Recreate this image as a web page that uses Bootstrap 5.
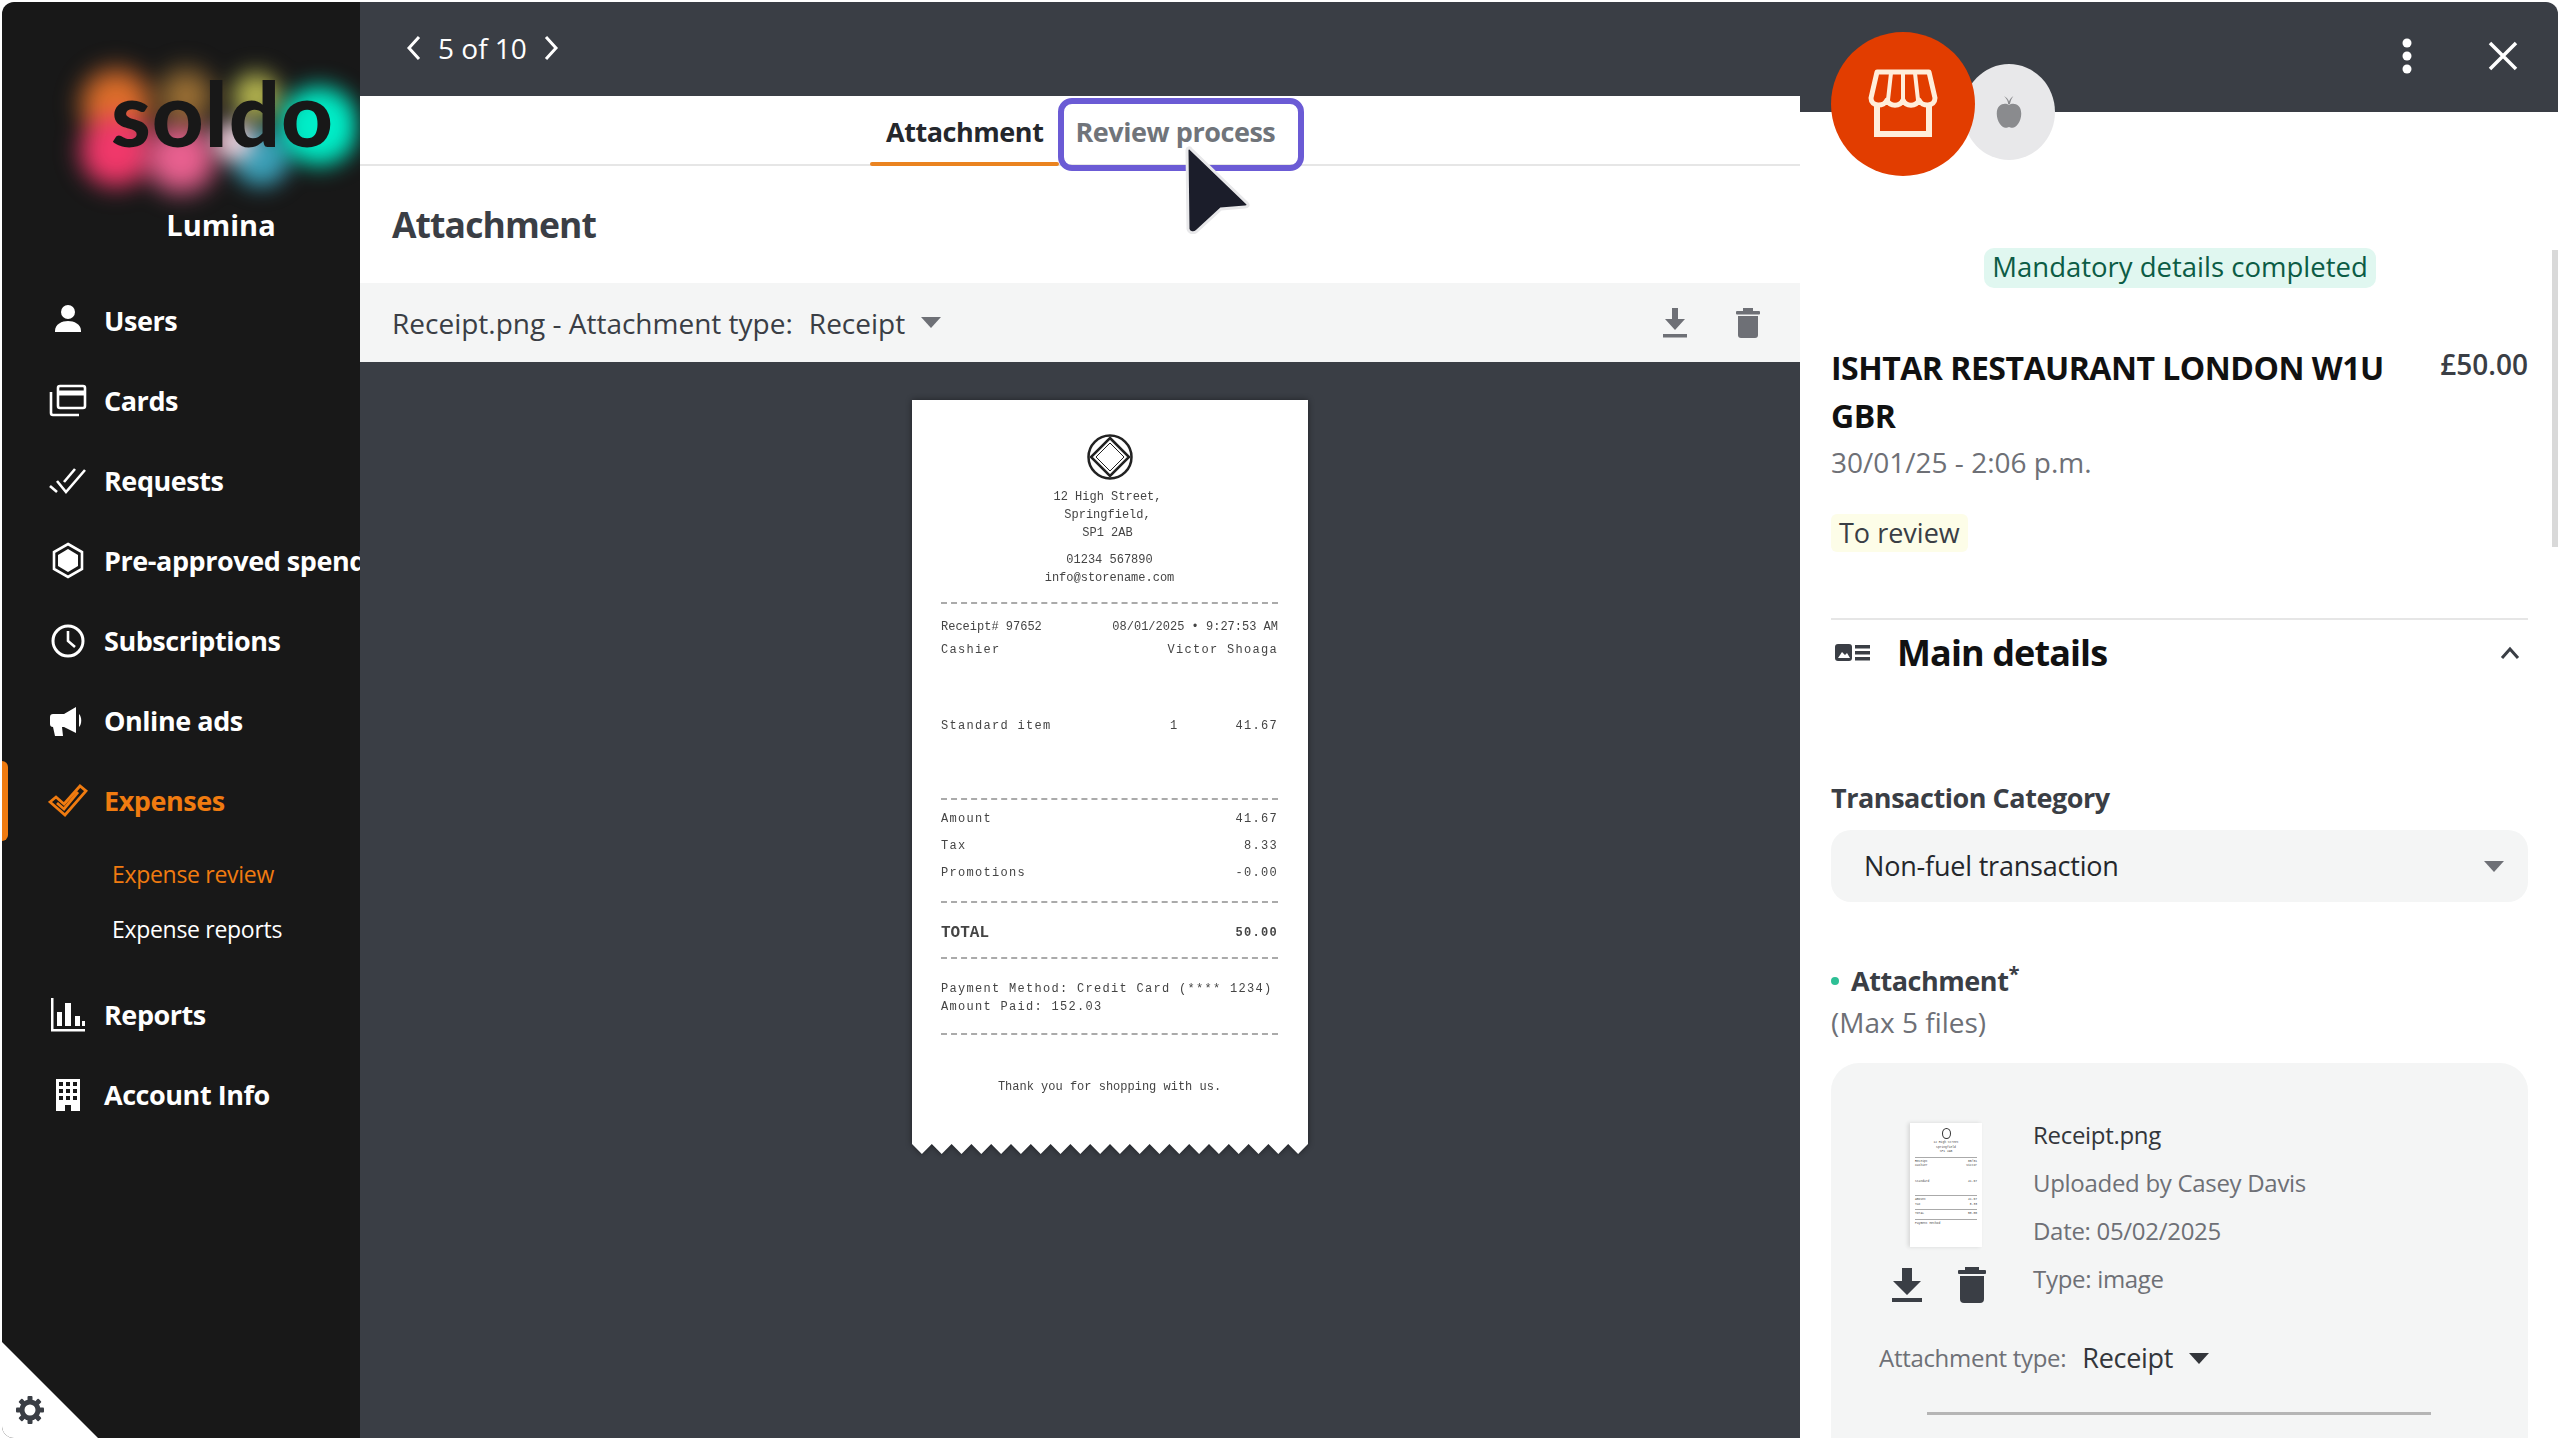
<!DOCTYPE html>
<html lang="en">
<head>
  <meta charset="UTF-8" />
  <title>Expense review</title>
  <link href="https://cdn.jsdelivr.net/npm/bootstrap@5.3.0/dist/css/bootstrap.min.css" rel="stylesheet" />
  <style>
    html, body { height: 100%; }
    body { font-family: "Open Sans", "Noto Sans", sans-serif; background: #fff; padding: 2px; overflow: hidden; color: #3a3e45; }
    a { text-decoration: none; }
    .app-frame { height: 1436px; border-radius: 12px; overflow: hidden; }

    /* sidebar */
    .side { width: 358px; background: #181818; color: #fff; position: relative; overflow: hidden; flex: none; }
    .logo-box { height: 190px; position: relative; }
    .logo-glow { position: absolute; left: 54px; top: 44px; width: 304px; height: 170px; filter: blur(9px);
      background:
        radial-gradient(circle 50px at 263px 80px, #00eec8 55%, transparent),
        radial-gradient(circle 28px at 178px 95px, #ecd0dc 35%, transparent),
        radial-gradient(circle 38px at 205px 112px, #3aa0b8 45%, transparent),
        radial-gradient(circle 34px at 200px 50px, #b8b850 30%, transparent),
        radial-gradient(circle 40px at 130px 50px, #9c7034 25%, transparent),
        radial-gradient(circle 48px at 125px 112px, #e8608f 40%, transparent),
        radial-gradient(circle 48px at 60px 105px, #f0386a 45%, transparent),
        radial-gradient(circle 48px at 60px 58px, #dd6e2a 40%, transparent); }
    .logo-word { position: absolute; left: 109px; top: 60px; font-family: "Lato", sans-serif; font-weight: 900; font-size: 90px; line-height: 100px; color: #181818; letter-spacing: 1px; }
    .org-name { font-size: 29px; font-weight: 700; text-align: center; line-height: 44px; margin-top: 11px; margin-left: 80px; }
    .side-nav { margin-top: 34px; }
    .side-link { height: 80px; display: flex; align-items: center; color: #fff; font-weight: 700; font-size: 27px; padding: 0 0 0 46px; white-space: nowrap; letter-spacing: -.45px; }
    .side-link:hover { color: #fff; }
    .side-ico { width: 40px; height: 40px; flex: none; margin-right: 16px; }
    .side-link.on { color: #f07b10; position: relative; }
    .side-link.on::before { content: ""; position: absolute; left: 0; top: 0; width: 6px; height: 80px; background: #f07b10; border-radius: 0 6px 6px 0; }
    .sub-group { padding: 16px 0 8px; }
    .side-sub { display: block; color: #fff; font-size: 23px; line-height: 34px; padding-left: 110px; margin-bottom: 21px; letter-spacing: -.3px; }
    .side-sub.on { color: #f07b10; }
    .corner { position: absolute; left: 0; bottom: 0; width: 96px; height: 96px; background: #fff; clip-path: polygon(0 0, 100% 100%, 0 100%); }
    .corner svg { position: absolute; left: 14px; bottom: 14px; }

    /* centre */
    .mid { width: 1440px; flex: none; background: #3a3e45; }
    .pager { height: 94px; color: #fff; font-size: 28px; padding: 0 0 2px 46px; }
    .tabs-row { height: 70px; background: #fff; border-bottom: 2px solid #e6e6e6; padding-left: 510px; position: relative; }
    .tab-item { font-size: 27px; font-weight: 700; height: 68px; line-height: 72px; padding: 0 16px; color: #24272c; position: relative; letter-spacing: -.45px; }
    .tab-item.on::after { content: ""; position: absolute; left: 0; right: 0; bottom: -2px; height: 4px; background: #ea8320; border-radius: 2px; }
    .tab-item.off { color: #70747a; }
    .tab-hl { position: absolute; left: 698px; top: 2px; width: 246px; height: 73px; border: 6px solid #6b5bd5; border-radius: 14px; }
    .pointer { position: absolute; left: 820px; top: 50px; }
    .head-block { height: 117px; background: #fff; padding-left: 32px; }
    .head-block h2 { font-size: 35.500px; font-weight: 700; margin: 0; letter-spacing: -.9px; color: #3a3e45; }
    .file-bar { height: 79px; background: #f4f5f5; padding: 0 40px 0 32px; font-size: 28px; }
    .caret-down { width: 0; height: 0; border-left: 10px solid transparent; border-right: 10px solid transparent; border-top: 11px solid #6e7076; display: inline-block; }
    .caret-dark { border-top-color: #33363b; }
    .dark-area { padding: 38px 0 0 552px; }

    /* receipt picture */
    .slip { width: 396px; height: 754px; background: #fff; padding: 34px 30px 0 29px; font-family: "Liberation Mono", monospace; font-size: 12px; line-height: 18px; color: #444; clip-path: polygon(var(--teeth)); filter: blur(.6px); }
    .slip-shadow { filter: drop-shadow(0 0 3px rgba(0,0,0,.45)); width: 396px; }
    .slip-rule { border-top: 2px dashed #aaa; height: 0; }
    .slip-wide { letter-spacing: 1.3px; white-space: nowrap; }
    .slip-total { font-size: 16px; font-weight: 700; }
    .slip-total-val { font-size: 12px; letter-spacing: 1.3px; }
    .slip-qty { margin-right: 57px; }
    .m5 { margin-top: 5px; } .m9 { margin-top: 9px; } .m10 { margin-top: 10px; } .m14 { margin-top: 14px; }
    .m15 { margin-top: 15px; } .m17 { margin-top: 17px; } .m19 { margin-top: 19px; } .m21 { margin-top: 21px; }
    .m43 { margin-top: 43px; } .m58 { margin-top: 58px; } .m63 { margin-top: 63px; }

    /* right panel */
    .detail { flex: 1; background: #fff; position: relative; min-width: 0; }
    .detail-top { height: 110px; background: #3a3e45; position: relative; padding: 30px 0 0 31px; }
    .round-main { width: 144px; height: 144px; border-radius: 50%; background: #e23d00; position: relative; z-index: 2; flex: none; }
    .round-alt { width: 92px; height: 96px; border-radius: 50%; background: #e8e8ea; margin: 32px 0 0 -12px; flex: none; position: relative; z-index: 1; }
    .top-actions { position: absolute; right: 40px; top: 36px; gap: 76px; }
    .detail-body { padding: 0 30px 0 31px; position: relative; }
    .done-pill { width: 392px; height: 40px; line-height: 38px; background: #e0f7f0; color: #0c5c45; border-radius: 10px; font-size: 27.500px; text-align: center; margin: 136px 0 0 153px; }
    .merchant-row { margin-top: 56px; }
    .merchant { font-size: 32px; font-weight: 700; line-height: 48px; color: #111; letter-spacing: -.5px; }
    .amount { font-size: 28px; font-weight: 600; white-space: nowrap; line-height: 40px; }
    .when { font-size: 28px; color: #6e7076; line-height: 40px; margin-top: 2px; }
    .status-chip { display: inline-block; background: #fdfde8; font-size: 27px; line-height: 38px; padding: 0 8px; border-radius: 6px; margin-top: 32px; }
    .sec-head { border-top: 2px solid #e6e6e6; margin-top: 66px; height: 68px; }
    .sec-head h3 { font-size: 36px; font-weight: 700; margin: 0 0 0 26px; color: #111; letter-spacing: -.9px; }
    .fld-label { font-size: 27px; font-weight: 700; line-height: 36px; letter-spacing: -.45px; }
    .fld-first { margin-top: 94px; }
    .pick-box { height: 72px; background: #f4f5f5; border-radius: 20px; padding: 0 24px 0 33px; font-size: 27px; margin-top: 14px; color: #24272c; letter-spacing: -.2px; }
    .attach-head { margin-top: 61px; }
    .dot-mark { width: 8px; height: 8px; border-radius: 50%; background: #2dbf95; margin-right: 12px; }
    .muted-line { color: #6e7076; font-size: 28px; line-height: 40px; margin-top: 3px; }
    .file-card { background: #f4f5f5; border-radius: 28px 28px 0 0; margin-top: 21px; height: 420px; padding: 60px 0 0 48px; }
    .thumb-col { width: 154px; flex: none; }
    .thumb { width: 72px; height: 124px; background: #fff; margin-left: 31px; padding: 5px 5px 0; box-shadow: -2px 0 4px rgba(0,0,0,.12); font-family: "Liberation Mono", monospace; font-size: 3px; line-height: 4.500px; color: #444; overflow: hidden; }
    .thumb-logo { width: 9px; height: 11px; border: 1.500px solid #333; border-radius: 50%; margin: 0 auto 2px; }
    .thumb-rule { border-top: 1px solid #aaa; margin: 2px 0; }
    .thumb-gap { margin-top: 11px; }
    .file-tools { margin: 20px 0 0 13px; gap: 36px; }
    .file-lines { margin-top: -12px; }
    .file-lines div { font-size: 24px; line-height: 48px; color: #6e7076; letter-spacing: -.3px; }
    .file-lines div:first-child { color: #33363b; }
    .type-row { font-size: 24px; margin-top: 35px; color: #6e7076; letter-spacing: -.3px; }
    .type-val { font-size: 27px; color: #33363b; }
    .card-rule { border-top: 3px solid #b5b5b5; width: 504px; margin: 33px 0 0 48px; }
    .scroll-thumb { position: absolute; right: 0; top: 248px; width: 6px; height: 297px; background: #d9d9d9; }
  </style>
</head>
<body>
<div class="app-frame d-flex">

  <aside class="side">
    <div class="logo-box">
      <div class="logo-glow"></div>
      <div class="logo-word">soldo</div>
    </div>
    <div class="org-name">Lumina</div>
    <nav class="side-nav nav flex-column flex-nowrap">
      <a class="side-link" href="#"><svg class="side-ico" viewBox="0 0 40 40"><circle cx="20" cy="11" r="7" fill="#fff"/><path d="M7 30c0-7 7-10 13-10s13 3 13 10v1H7z" fill="#fff"/></svg>Users</a>
      <a class="side-link" href="#"><svg class="side-ico" viewBox="0 0 40 40" fill="none" stroke="#fff" stroke-width="2.600"><rect x="10" y="5" width="27" height="22" rx="2"/><path d="M10 12h27" stroke-width="5"/><path d="M3 11v21a2 2 0 0 0 2 2h26"/></svg>Cards</a>
      <a class="side-link" href="#"><svg class="side-ico" viewBox="0 0 40 40" fill="none" stroke="#fff" stroke-width="2.600"><path d="M2 25l7 6"/><path d="M9 20l9 11L37 9"/><path d="M27 8L16 21"/></svg>Requests</a>
      <a class="side-link" href="#"><svg class="side-ico" viewBox="0 0 40 40"><path d="M20 3l14 8v17l-14 8-14-8V11z" fill="none" stroke="#fff" stroke-width="2.600"/><path d="M20 8l10 6v11l-10 6-10-6V14z" fill="#fff"/></svg>Pre-approved spend</a>
      <a class="side-link" href="#"><svg class="side-ico" viewBox="0 0 40 40" fill="none" stroke="#fff" stroke-width="3"><circle cx="20" cy="20" r="15"/><path d="M20 10v10l7 6" stroke-width="2.600"/></svg>Subscriptions</a>
      <a class="side-link" href="#"><svg class="side-ico" viewBox="0 0 40 40" fill="#fff"><path d="M5 13h11l12-7v26l-12-6h-2l1 9h-8l-2-9H5a3 3 0 0 1-3-3v-7a3 3 0 0 1 3-3z"/><path d="M31 13c3 3 3 10 0 13z"/></svg>Online ads</a>
      <a class="side-link on" href="#"><svg class="side-ico" viewBox="0 0 40 40" fill="none" stroke="#f07b10" stroke-width="2.800"><path d="M2 21l6-5 8 7L32 5l6 5-21 24z"/><path d="M9 22l7 6 14-17"/></svg>Expenses</a>
      <div class="sub-group">
        <a class="side-sub on" href="#">Expense review</a>
        <a class="side-sub" href="#">Expense reports</a>
      </div>
      <a class="side-link" href="#"><svg class="side-ico" viewBox="0 0 40 40" fill="#fff"><path d="M3 3h2.500v31H37v2.500H3z"/><rect x="9" y="17" width="5" height="14"/><rect x="17" y="8" width="6" height="23"/><rect x="27" y="21" width="5" height="10"/><rect x="34" y="26" width="3" height="5"/></svg>Reports</a>
      <a class="side-link" href="#"><svg class="side-ico" viewBox="0 0 40 40"><path d="M8 4h24v32H23v-6h-6v6H8z" fill="#fff"/><g fill="#181818"><rect x="11" y="7" width="4" height="4"/><rect x="18" y="7" width="4" height="4"/><rect x="25" y="7" width="4" height="4"/><rect x="11" y="14" width="4" height="4"/><rect x="18" y="14" width="4" height="4"/><rect x="25" y="14" width="4" height="4"/><rect x="11" y="21" width="4" height="4"/><rect x="18" y="21" width="4" height="4"/><rect x="25" y="21" width="4" height="4"/></g></svg>Account Info</a>
    </nav>
    <div class="corner">
      <svg width="28" height="28" viewBox="0 0 28 28"><g fill="#3a3e45"><circle cx="14" cy="14" r="8" fill="none" stroke="#3a3e45" stroke-width="5"/><rect x="11.500" y="0" width="5" height="5" rx="1"/><rect x="11.500" y="23" width="5" height="5" rx="1"/><rect x="0" y="11.500" width="5" height="5" rx="1"/><rect x="23" y="11.500" width="5" height="5" rx="1"/><rect x="11.500" y="0" width="5" height="5" rx="1" transform="rotate(45 14 14)"/><rect x="11.500" y="23" width="5" height="5" rx="1" transform="rotate(45 14 14)"/><rect x="0" y="11.500" width="5" height="5" rx="1" transform="rotate(45 14 14)"/><rect x="23" y="11.500" width="5" height="5" rx="1" transform="rotate(45 14 14)"/></g></svg>
    </div>
  </aside>

  <main class="mid d-flex flex-column position-relative">
    <div class="pager d-flex align-items-center gap-3">
      <svg width="16" height="26" viewBox="0 0 16 26" fill="none" stroke="#fff" stroke-width="3"><path d="M13 2L3 13l10 11"/></svg>
      <span>5 of 10</span>
      <svg width="16" height="26" viewBox="0 0 16 26" fill="none" stroke="#fff" stroke-width="3"><path d="M3 2l10 11L3 24"/></svg>
    </div>
    <div class="tabs-row d-flex">
      <div class="tab-item on">Attachment</div>
      <div class="tab-item off">Review process</div>
      <div class="tab-hl"></div>
      <svg class="pointer" width="72" height="88" viewBox="0 0 72 88"><path d="M7 4c0-2 3-3 4-1l56 54c2 2 1 4-2 4l-24 2-24 22c-3 3-8 2-9-2z" fill="#1b1d2a" stroke="#e8e8ea" stroke-width="3"/></svg>
    </div>
    <div class="head-block d-flex align-items-center"><h2>Attachment</h2></div>
    <div class="file-bar d-flex align-items-center">
      <span>Receipt.png - Attachment type:</span>
      <span class="ms-3">Receipt</span>
      <span class="caret-down ms-3"></span>
      <span class="ms-auto d-flex align-items-center gap-5">
        <svg width="26" height="30" viewBox="0 0 26 30" fill="#6e7076"><path d="M10 0h6v11h7L13 22 3 11h7z"/><rect x="1" y="26" width="24" height="3.500"/></svg>
        <svg width="24" height="30" viewBox="0 0 24 30" fill="#6e7076"><rect x="0" y="3" width="24" height="3.500" rx="1"/><rect x="7" y="0" width="10" height="3"/><path d="M2 8h20v19a3 3 0 0 1-3 3H5a3 3 0 0 1-3-3z"/></svg>
      </span>
    </div>
    <div class="dark-area flex-grow-1">
      <div class="slip-shadow">
        <div class="slip" id="slip">
          <svg class="d-block mx-auto" width="48" height="46" viewBox="0 0 48 46" fill="none" stroke="#222" stroke-width="2.500"><circle cx="24" cy="23" r="21.500"/><path d="M24 4l19 19-19 19L5 23z"/><path d="M24 9l14 14-14 14-14-14z" stroke-width="1"/></svg>
          <div class="text-center mt-2 pe-1">12 High Street,<br>Springfield,<br>SP1 2AB</div>
          <div class="text-center m9">01234 567890<br>info@storename.com</div>
          <div class="slip-rule m15"></div>
          <div class="d-flex justify-content-between m14"><span>Receipt# 97652</span><span>08/01/2025 • 9:27:53 AM</span></div>
          <div class="d-flex justify-content-between m5 slip-wide"><span>Cashier</span><span>Victor Shoaga</span></div>
          <div class="d-flex m58 slip-wide"><span>Standard item</span><span class="ms-auto slip-qty">1</span><span>41.67</span></div>
          <div class="slip-rule m63"></div>
          <div class="d-flex justify-content-between m10 slip-wide"><span>Amount</span><span>41.67</span></div>
          <div class="d-flex justify-content-between m9 slip-wide"><span>Tax</span><span>8.33</span></div>
          <div class="d-flex justify-content-between m9 slip-wide"><span>Promotions</span><span>-0.00</span></div>
          <div class="slip-rule m19"></div>
          <div class="d-flex justify-content-between align-items-center slip-total m21"><span>TOTAL</span><span class="slip-total-val">50.00</span></div>
          <div class="slip-rule m15"></div>
          <div class="m21 slip-wide">Payment Method: Credit Card (**** 1234)<br>Amount Paid: 152.03</div>
          <div class="slip-rule m17"></div>
          <div class="text-center m43">Thank you for shopping with us.</div>
        </div>
      </div>
    </div>
  </main>

  <section class="detail">
    <div class="detail-top d-flex align-items-start">
      <div class="round-main d-flex align-items-center justify-content-center">
        <svg width="72" height="70" viewBox="0 0 72 70" fill="none" stroke="#ffeeda" stroke-width="5"><path d="M10 3h52l6 26c0 9-13 9-16 2-3 7-13 7-16 0-3 7-13 7-16 0-3 7-16 7-16-2z" stroke-linejoin="round"/><path d="M24 4l-3 27M36 4v27M48 4l3 27" stroke-width="4"/><path d="M10 36v29h52V36" stroke-width="6"/></svg>
      </div>
      <div class="round-alt d-flex align-items-center justify-content-center">
        <svg width="28" height="34" viewBox="0 0 32 38" fill="#8a8b8e"><path d="M16 11c-4-3-14-2-14 10 0 9 6 16 10 16 2 0 3-1 4-1s2 1 4 1c4 0 10-7 10-16 0-12-10-13-14-10z"/><path d="M15 10c0-4-3-8-5-9 3 1 5 3 6 6 1-3 3-5 5-6-2 2-3 5-4 9z"/></svg>
      </div>
      <div class="top-actions d-flex align-items-center">
        <svg width="10" height="36" viewBox="0 0 10 36" fill="#fff"><circle cx="5" cy="5" r="4.500"/><circle cx="5" cy="18" r="4.500"/><circle cx="5" cy="31" r="4.500"/></svg>
        <svg width="30" height="30" viewBox="0 0 30 30" fill="none" stroke="#fff" stroke-width="3.500"><path d="M2 2l26 26M28 2L2 28"/></svg>
      </div>
    </div>
    <div class="scroll-thumb"></div>
    <div class="detail-body">
      <div class="done-pill">Mandatory details completed</div>
      <div class="d-flex justify-content-between gap-4 merchant-row">
        <div class="merchant">ISHTAR RESTAURANT LONDON W1U GBR</div>
        <div class="amount">£50.00</div>
      </div>
      <div class="when">30/01/25 - 2:06 p.m.</div>
      <div class="status-chip">To review</div>
      <div class="sec-head d-flex align-items-center">
        <svg width="36" height="18" viewBox="0 0 36 18" fill="#3a3e45" class="ms-1"><rect width="17" height="17" rx="3"/><path d="M3 14l4-6 3 3 2-2 3 5z" fill="#fff"/><rect x="20" y="1" width="15" height="3.500"/><rect x="20" y="7" width="15" height="3.500"/><rect x="20" y="13" width="15" height="3.500"/></svg>
        <h3>Main details</h3>
        <svg class="ms-auto me-2" width="20" height="14" viewBox="0 0 20 14" fill="none" stroke="#3a3e45" stroke-width="3"><path d="M2 12l8-9 8 9"/></svg>
      </div>
      <div class="fld-label fld-first">Transaction Category</div>
      <div class="pick-box d-flex align-items-center justify-content-between">
        <span>Non-fuel transaction</span><span class="caret-down"></span>
      </div>
      <div class="d-flex align-items-center attach-head">
        <span class="dot-mark"></span><span class="fld-label">Attachment<sup>*</sup></span>
      </div>
      <div class="muted-line">(Max 5 files)</div>
      <div class="file-card">
        <div class="d-flex">
          <div class="thumb-col">
            <div class="thumb">
              <div class="thumb-logo"></div>
              <div class="text-center">12 High Street<br>Springfield<br>SP1 2AB</div>
              <div class="thumb-rule"></div>
              <div class="d-flex justify-content-between"><span>Receipt</span><span>08/01</span></div>
              <div class="d-flex justify-content-between"><span>Cashier</span><span>Victor</span></div>
              <div class="d-flex justify-content-between thumb-gap"><span>Standard</span><span>41.67</span></div>
              <div class="thumb-rule thumb-gap"></div>
              <div class="d-flex justify-content-between"><span>Amount</span><span>41.67</span></div>
              <div class="d-flex justify-content-between"><span>Tax</span><span>8.33</span></div>
              <div class="thumb-rule"></div>
              <div class="d-flex justify-content-between"><span>TOTAL</span><span>50.00</span></div>
              <div class="thumb-rule"></div>
              <div>Payment Method</div>
            </div>
            <div class="file-tools d-flex align-items-center">
              <svg width="30" height="34" viewBox="0 0 30 34" fill="#3a3e45"><path d="M10 0h10v13h9L15 27 1 13h9z"/><rect y="30" width="30" height="4"/></svg>
              <svg width="28" height="36" viewBox="0 0 28 36" fill="#3a3e45"><rect y="3" width="28" height="4" rx="1"/><rect x="7" width="14" height="3"/><path d="M2 9h24v23a4 4 0 0 1-4 4H6a4 4 0 0 1-4-4z"/></svg>
            </div>
          </div>
          <div class="file-lines">
            <div>Receipt.png</div>
            <div>Uploaded by Casey Davis</div>
            <div>Date: 05/02/2025</div>
            <div>Type: image</div>
          </div>
        </div>
        <div class="type-row d-flex align-items-center">
          <span>Attachment type:</span>
          <span class="type-val ms-3">Receipt</span>
          <span class="caret-down caret-dark ms-3"></span>
        </div>
        <div class="card-rule"></div>
      </div>
    </div>
  </section>
</div>
<script src="https://cdn.jsdelivr.net/npm/bootstrap@5.3.0/dist/js/bootstrap.bundle.min.js"></script>
<script>
  // torn bottom edge of the receipt
  const pts = ["0 0", "100% 0"];
  const w = 396, h = 754, n = 20;
  for (let i = n; i >= 0; i--) {
    const x = w * i / n;
    pts.push(x + "px " + (h - 10) + "px");
    if (i > 0) pts.push((x - w / n / 2) + "px " + h + "px");
  }
  document.getElementById("slip").style.setProperty("--teeth", pts.join(","));
</script>
</body>
</html>
